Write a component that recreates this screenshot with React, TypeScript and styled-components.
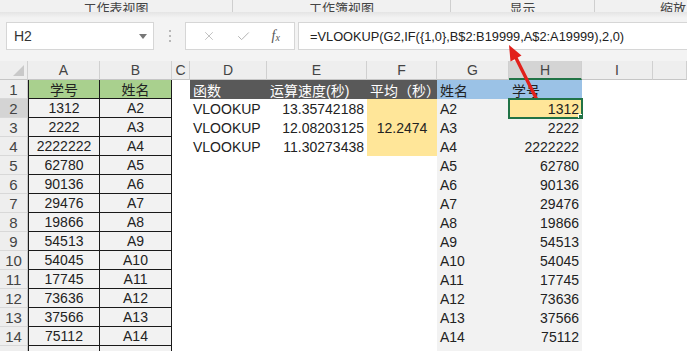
import React from 'react';
import styled, { createGlobalStyle } from 'styled-components';
import { X, Check } from 'lucide-react';

const GlobalStyle = createGlobalStyle`
  html, body {
    margin: 0;
    padding: 0;
    background: #ffffff;
  }
  * {
    box-sizing: border-box;
  }
`;

const FONT = `"Liberation Sans", "Noto Sans CJK SC", sans-serif`;

export const Page = styled.div`
  position: relative;
  width: 687px;
  height: 351px;
  overflow: hidden;
  background: #f3f3f3;
  font-family: ${FONT};
  color: #222;
`;

export const Ribbon = styled.div`
  display: flex;
  height: 12px;
  overflow: hidden;
  background: #f1f1f1;
`;

export const RibbonGroup = styled.div<{ $w: number; $last?: boolean }>`
  flex: 0 0 ${({ $w }) => $w}px;
  display: flex;
  justify-content: center;
  align-items: flex-end;
  overflow: hidden;
  border-right: ${({ $last }) => ($last ? 'none' : '1px solid #cfcfcf')};

  & span {
    font-family: "Noto Sans CJK SC", sans-serif;
    font-size: 13px;
    line-height: 16px;
    margin-bottom: -4px;
    color: #444;
    white-space: nowrap;
  }
`;

export const RibbonShade = styled.div`
  height: 10px;
  background: linear-gradient(#e4e4e4, #f3f3f3 60%);
`;

export const FormulaBar = styled.div`
  display: flex;
  align-items: stretch;
  height: 28px;
  padding-left: 6px;
  margin-bottom: 11px;
`;

export const NameBox = styled.div`
  position: relative;
  flex: 0 0 148px;
  display: flex;
  align-items: center;
  padding-left: 7px;
  background: #fff;
  border: 1px solid #d6d6d6;
  font-size: 14px;
  color: #333;

  &::after {
    content: '';
    position: absolute;
    right: 6px;
    top: 11px;
    border-left: 4px solid transparent;
    border-right: 4px solid transparent;
    border-top: 5px solid #777;
  }
`;

export const Grip = styled.div`
  flex: 0 0 31px;
  display: flex;
  flex-direction: column;
  align-items: center;
  justify-content: center;
  gap: 3px;

  & i {
    width: 2px;
    height: 2px;
    background: #b8b8b8;
  }
`;

export const FuncBox = styled.div`
  flex: 0 0 110px;
  display: flex;
  align-items: center;
  justify-content: space-around;
  margin-right: 3px;
  padding: 0 4px 0 6px;
  background: #fff;
  border: 1px solid #d6d6d6;
  color: #b4b4b4;
`;

export const Fx = styled.span`
  font-family: "Liberation Serif", serif;
  font-style: italic;
  font-size: 14px;
  color: #555;

  & sub {
    font-size: 10px;
    vertical-align: -1px;
  }
`;

export const FormulaBox = styled.div`
  flex: 1;
  display: flex;
  align-items: center;
  padding-left: 11px;
  background: #fff;
  border: 1px solid #d6d6d6;
  border-right: none;
  font-size: 12.8px;
  color: #222;
  white-space: nowrap;
`;

export const Sheet = styled.div`
  display: grid;
  grid-template-columns: 28px 72px 72px 18px 77px 100px 70px 72px 73px 71px 1fr;
  grid-auto-rows: 19px;
  background: #fff;
`;

export const Corner = styled.div`
  position: relative;
  background: #eeeeee;
  border-right: 1px solid #d0d0d0;
  border-bottom: 1px solid #c6c6c6;

  &::after {
    content: '';
    position: absolute;
    right: 3px;
    bottom: 3px;
    border-left: 11px solid transparent;
    border-bottom: 11px solid #c9c9c9;
  }
`;

export const ColHead = styled.div<{ $active?: boolean }>`
  display: flex;
  align-items: center;
  justify-content: center;
  font-size: 14px;
  color: #444;
  background: ${({ $active }) => ($active ? '#d4d4d4' : '#eeeeee')};
  border-right: 1px solid #d0d0d0;
  border-bottom: ${({ $active }) => ($active ? '2px solid #217346' : '1px solid #c6c6c6')};
`;

export const RowHead = styled.div<{ $active?: boolean }>`
  display: flex;
  align-items: center;
  justify-content: center;
  font-size: 15px;
  color: #444;
  background: ${({ $active }) => ($active ? '#d4d4d4' : '#eeeeee')};
  border-right: 1px solid #c6c6c6;
  border-bottom: 1px solid #d8d8d8;
`;

type Align = 'left' | 'center' | 'right';

export const Cell = styled.div<{
  $bg?: string;
  $align?: Align;
  $color?: string;
  $boxed?: boolean;
  $boxLeft?: boolean;
  $span?: number;
}>`
  display: flex;
  align-items: center;
  justify-content: ${({ $align }) =>
    $align === 'right' ? 'flex-end' : $align === 'center' ? 'center' : 'flex-start'};
  padding: 0 3px;
  overflow: hidden;
  white-space: nowrap;
  font-size: 14px;
  background: ${({ $bg }) => $bg || '#ffffff'};
  color: ${({ $color }) => $color || '#222'};
  grid-row: ${({ $span }) => ($span ? `span ${$span}` : 'auto')};
  border-right: ${({ $boxed }) => ($boxed ? '1px solid #1a1a1a' : 'none')};
  border-bottom: ${({ $boxed }) => ($boxed ? '1px solid #1a1a1a' : 'none')};
  border-left: ${({ $boxLeft }) => ($boxLeft ? '1px solid #1a1a1a' : 'none')};
`;

export const ActiveCell = styled(Cell)`
  position: relative;
  z-index: 1;
  outline: 2px solid #217346;
  outline-offset: -1px;

  &::after {
    content: '';
    position: absolute;
    right: -4px;
    bottom: -4px;
    width: 6px;
    height: 6px;
    background: #217346;
    border: 1px solid #fff;
  }
`;

export const Overlay = styled.svg`
  position: absolute;
  left: 0;
  top: 0;
  pointer-events: none;
`;

const GREEN = '#a9d08e';
const DARK = '#595959';
const BLUE = '#9bc2e6';
const YELLOW = '#ffe699';
const GREY = '#f2f2f2';

const ids = ['1312', '2222', '2222222', '62780', '90136', '29476', '19866', '54513', '54045', '17745', '73636', '37566', '75112'];
const times = ['13.35742188', '12.08203125', '11.30273438'];
const letters = ['A', 'B', 'C', 'D', 'E', 'F', 'G', 'H', 'I', ''];

const SheetRow: React.FC<{ r: number }> = ({ r }) => {
  const id = r >= 2 && r <= 14 ? ids[r - 2] : '';
  const name = r >= 2 && r <= 14 ? `A${r}` : '';
  const inCalc = r >= 2 && r <= 4;

  return (
    <>
      <RowHead $active={r === 2}>{r}</RowHead>
      {r === 1 ? (
        <>
          <Cell $bg={GREEN} $align="center" $boxed $boxLeft>学号</Cell>
          <Cell $bg={GREEN} $align="center" $boxed>姓名</Cell>
        </>
      ) : (
        <>
          <Cell $bg={GREY} $align="center" $boxed $boxLeft>{id}</Cell>
          <Cell $bg={GREY} $align="center" $boxed>{name}</Cell>
        </>
      )}
      <Cell />
      {r === 1 ? (
        <>
          <Cell $bg={DARK} $color="#fff">函数</Cell>
          <Cell $bg={DARK} $color="#fff">运算速度(秒)</Cell>
          <Cell $bg={DARK} $color="#fff">平均（秒）</Cell>
        </>
      ) : (
        <>
          <Cell>{inCalc ? 'VLOOKUP' : ''}</Cell>
          <Cell $align="right">{inCalc ? times[r - 2] : ''}</Cell>
          {r === 2 && (
            <Cell $bg={YELLOW} $align="center" $span={3}>12.2474</Cell>
          )}
          {!inCalc && <Cell />}
        </>
      )}
      {r === 1 ? (
        <>
          <Cell $bg={BLUE}>姓名</Cell>
          <Cell $bg={BLUE}>学号</Cell>
        </>
      ) : (
        <>
          <Cell $bg={GREY}>{name}</Cell>
          {r === 2 ? (
            <ActiveCell $bg={YELLOW} $align="right">{id}</ActiveCell>
          ) : (
            <Cell $bg={GREY} $align="right">{id}</Cell>
          )}
        </>
      )}
      <Cell />
      <Cell />
    </>
  );
};

const Arrow: React.FC = () => (
  <Overlay width="687" height="351" viewBox="0 0 687 351">
    <line x1="538" y1="102" x2="516" y2="58" stroke="#e2211c" strokeWidth="3.4" strokeLinecap="round" />
    <polygon points="509,45 521.5,55.5 510.5,61.5" fill="#e2211c" />
  </Overlay>
);

export default function App() {
  const rows = Array.from({ length: 15 }, (_, i) => i + 1);
  return (
    <>
      <GlobalStyle />
      <Page>
        <Ribbon>
          <RibbonGroup $w={233}><span>工作表视图</span></RibbonGroup>
          <RibbonGroup $w={218}><span>工作簿视图</span></RibbonGroup>
          <RibbonGroup $w={144}><span>显示</span></RibbonGroup>
          <RibbonGroup $w={156} $last><span>缩放</span></RibbonGroup>
        </Ribbon>
        <RibbonShade />
        <FormulaBar>
          <NameBox>H2</NameBox>
          <Grip>
            <i />
            <i />
            <i />
          </Grip>
          <FuncBox>
            <X size={14} strokeWidth={1.4} />
            <Check size={15} strokeWidth={1.6} />
            <Fx>f<sub>x</sub></Fx>
          </FuncBox>
          <FormulaBox>=VLOOKUP(G2,IF({'{'}1,0{'}'},B$2:B19999,A$2:A19999),2,0)</FormulaBox>
        </FormulaBar>
        <Sheet>
          <Corner />
          {letters.map((l, i) => (
            <ColHead key={i} $active={l === 'H'}>{l}</ColHead>
          ))}
          {rows.map((r) => (
            <SheetRow key={r} r={r} />
          ))}
        </Sheet>
        <Arrow />
      </Page>
    </>
  );
}
